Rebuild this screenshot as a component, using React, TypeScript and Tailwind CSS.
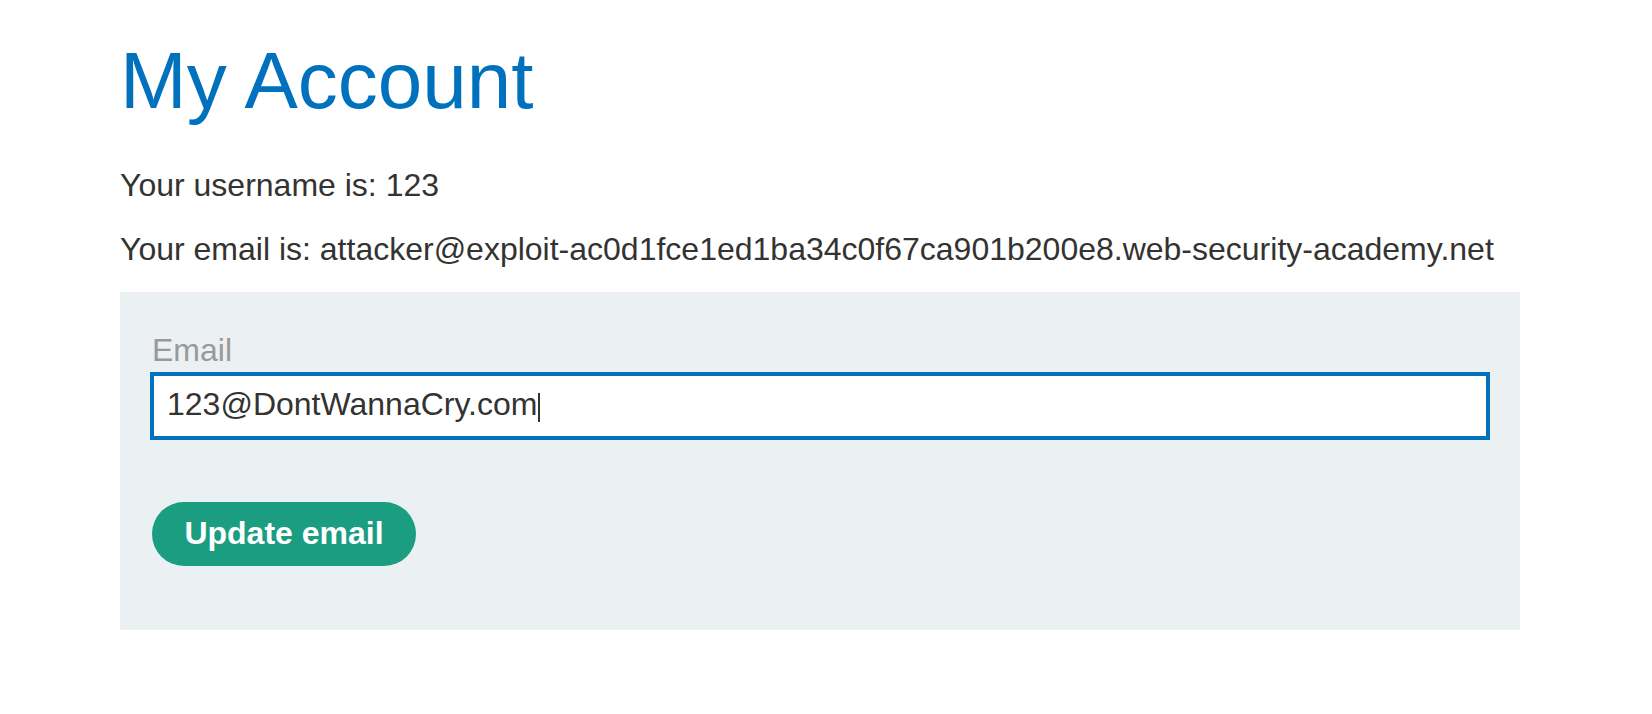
import React from "react";

const account = {
  username: "123",
  email: "attacker@exploit-ac0d1fce1ed1ba34c0f67ca901b200e8.web-security-academy.net",
  newEmail: "123@DontWannaCry.com",
};

export default function App() {
  return (
    <div className="min-h-screen bg-white font-['Liberation_Sans',Arial,sans-serif] text-[#333332]">
      <div className="w-[1400px] ml-[120px] pt-[41px]">
        <h1 className="text-[80px] leading-[80px] font-normal text-[#0071bc] mb-[42px]">
          My Account
        </h1>

        {/* Account details */}
        <p className="text-[32px] leading-[44px]">
          Your username is: {account.username}
        </p>
        <p className="text-[32px] leading-[44px] mt-[20px] whitespace-nowrap">
          Your email is: {account.email}
        </p>

        {/* Change email form */}
        <form
          className="mt-[21px] bg-[#ebf0f2] px-[30px] pt-[36px] pb-[64px]"
          onSubmit={(e) => e.preventDefault()}
        >
          <label className="block pl-[2px] text-[32px] leading-[44px] text-[#999999]">
            Email
          </label>
          <div className="flex items-center w-full h-[68px] border-4 border-[#0071bc] bg-white pl-[13px] pr-[9px] pb-[4px] text-[32px]">
            <span>{account.newEmail}</span>
            <span className="inline-block w-[2px] h-[29px] bg-[#333332] ml-[1px] translate-y-[3px]" />
          </div>
          <button
            type="submit"
            className="mt-[62px] ml-[2px] w-[264px] h-[64px] rounded-full bg-[#1a9d80] text-white text-[32px] font-bold pb-[3px]"
          >
            Update email
          </button>
        </form>
      </div>
    </div>
  );
}
